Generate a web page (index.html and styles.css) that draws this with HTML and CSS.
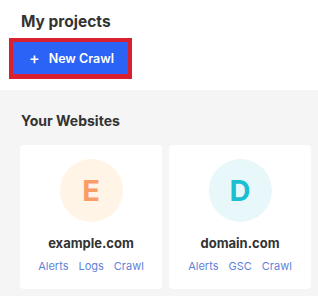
FILE: index.html
```html
<!DOCTYPE html>
<html>
<head>
<meta charset="utf-8">
<link rel="stylesheet" href="styles.css">
</head>
<body>
<header class="top">
  <h1 class="title">My projects</h1>
  <button class="new-crawl"><span class="plus">+</span>New Crawl</button>
</header>
<main class="sites">
  <h2 class="subtitle">Your Websites</h2>
  <div class="grid">
    <div class="card">
      <div class="avatar avatar-e">E</div>
      <div class="name">example.com</div>
      <div class="links"><a>Alerts</a><a>Logs</a><a>Crawl</a></div>
    </div>
    <div class="card">
      <div class="avatar avatar-d">D</div>
      <div class="name">domain.com</div>
      <div class="links"><a>Alerts</a><a>GSC</a><a>Crawl</a></div>
    </div>
  </div>
</main>
</body>
</html>
```
FILE: styles.css
```css
html, body {
  margin: 0;
  padding: 0;
  background: #f5f5f5;
  font-family: Inter, "Liberation Sans", sans-serif;
}
.top {
  background: #ffffff;
  padding: 10px 0 10px 9px;
  height: 70px;
}
.title {
  margin: 0 0 0 12px;
  font-size: 15.5px;
  font-weight: 700;
  color: #333333;
  line-height: 22px;
  padding-top: 1px;
}
.new-crawl {
  margin-top: 5px;
  box-sizing: border-box;
  width: 123px;
  height: 41px;
  border: 4px solid #d9202e;
  border-bottom-width: 5px;
  background: #2b63f6;
  color: #ffffff;
  font-family: inherit;
  font-size: 12.5px;
  font-weight: 600;
  display: flex;
  align-items: center;
  justify-content: center;
  gap: 9px;
  padding: 0 0 0 2px;
}
.plus {
  font-size: 16px;
  font-weight: 500;
  line-height: 1;
}
.sites {
  padding: 21px 7px 7px 20px;
}
.subtitle {
  margin: 0 0 14px 1px;
  font-size: 14px;
  font-weight: 700;
  color: #333333;
  line-height: 20px;
}
.grid {
  display: flex;
  gap: 7px;
}
.card {
  width: 142px;
  height: 144px;
  box-sizing: border-box;
  background: #ffffff;
  border-radius: 4px;
  padding-top: 14px;
  display: flex;
  flex-direction: column;
  align-items: center;
}
.avatar {
  width: 63px;
  height: 63px;
  border-radius: 50%;
  display: flex;
  align-items: center;
  justify-content: center;
  font-size: 29px;
  font-weight: 700;
}
.avatar-e {
  background: #fff4e6;
  color: #f89c68;
}
.avatar-d {
  background: #e8f7fa;
  color: #1cbfd0;
}
.name {
  margin-top: 12px;
  font-size: 13px;
  font-weight: 700;
  color: #333333;
  line-height: 18px;
}
.links {
  margin-top: 7px;
  display: flex;
  gap: 10px;
  font-size: 11px;
  line-height: 14px;
}
.links a {
  color: #5f82d9;
}
```
